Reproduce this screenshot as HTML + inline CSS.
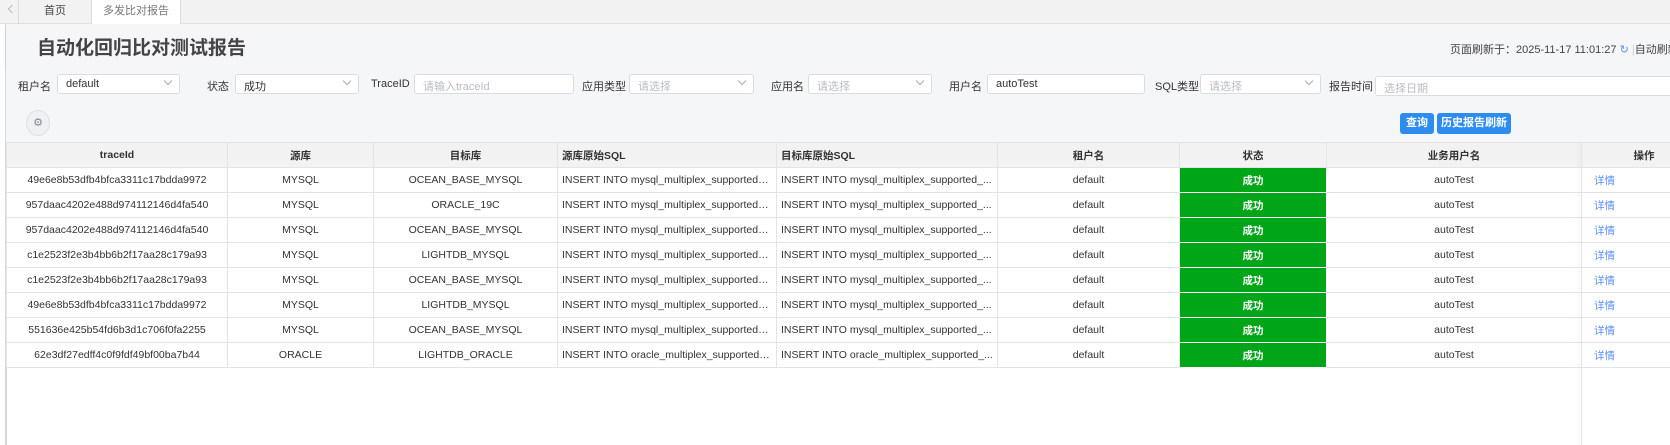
<!DOCTYPE html>
<html><head><meta charset="utf-8"><style>
*{box-sizing:border-box;margin:0;padding:0}
body{width:1670px;height:445px;overflow:hidden;background:#fff;font-family:"Liberation Sans","Noto Sans CJK SC",sans-serif;font-size:11px;color:#333;position:relative}
.a{position:absolute;white-space:nowrap}
.tabs{left:0;top:0;width:1670px;height:24px;background:#f2f2f2;border-bottom:1px solid #e0e0e0}
.hdr{left:6px;top:24px;width:1664px;height:44px;background:#f5f6f8;box-shadow:0 2px 3px rgba(0,0,0,.08)}
.flt{left:6px;top:68px;width:1664px;height:74px;background:#f5f6f8}
.lbl{font-size:11px;color:#333;top:78px}
.inp{top:74px;height:20px;background:#fff;border:1px solid #d8dce5;border-radius:3px;font-size:11px;padding:3px 8px;color:#333}
.ph{color:#b8bcc4}
.arr{position:absolute;right:8px;top:3px;width:6px;height:6px;border-right:1px solid #aaa;border-bottom:1px solid #aaa;transform:rotate(45deg)}
table{position:absolute;left:6px;top:142px;border-collapse:collapse;table-layout:fixed;width:1700px}
td,th{height:25px;border:1px solid #e4e4e4;font-size:10.5px;text-align:center;white-space:nowrap;overflow:hidden;text-overflow:ellipsis;padding:0 4px}
th{background:#f2f2f2;font-weight:bold;color:#333}
td.l,th.l{text-align:left}
td.g{background:#00a518;color:#fff;font-weight:bold;border-color:#fff}
td.lnk{color:#5b8ff9;text-align:left;padding-left:12px}
.btn{top:113px;height:21px;background:#2d8cf0;color:#fff;border-radius:3px;font-size:11px;font-weight:bold;line-height:21px;text-align:center}
</style></head><body>
<div class="a tabs"></div>
<div class="a" style="left:9px;top:6px;width:6px;height:6px;border-left:1px solid #bbb;border-bottom:1px solid #bbb;transform:rotate(45deg)"></div>
<div class="a" style="left:18px;top:0;width:74px;height:24px;border-right:1px solid #ddd;border-left:1px solid #ddd;text-align:center;line-height:23px;font-size:11px;color:#444">首页</div>
<div class="a" style="left:92px;top:0;width:89px;height:25px;background:#fff;border-right:1px solid #ddd;text-align:center;line-height:23px;font-size:11px;color:#777">多发比对报告</div>
<div class="a" style="left:5px;top:24px;width:2px;height:421px;background:#d5d8de"></div>
<div class="a hdr"></div>
<div class="a" style="left:37px;top:33px;font-size:19px;font-weight:bold;color:#444">自动化回归比对测试报告</div>
<div class="a" style="left:1450px;top:41px;font-size:11px;color:#444">页面刷新于：2025-11-17 11:01:27 <span style="color:#5b8ff9">↻</span> <span style="color:#ccc">|</span>自动刷新</div>
<div class="a flt"></div>
<div class="a lbl" style="left:18px">租户名</div>
<div class="a inp" style="left:57px;width:123px">default<i class="arr"></i></div>
<div class="a lbl" style="left:207px">状态</div>
<div class="a inp" style="left:235px;width:124px">成功<i class="arr"></i></div>
<div class="a lbl" style="left:371px">TraceID</div>
<div class="a inp ph" style="left:414px;width:160px">请输入traceId</div>
<div class="a lbl" style="left:582px">应用类型</div>
<div class="a inp ph" style="left:629px;width:125px">请选择<i class="arr"></i></div>
<div class="a lbl" style="left:771px">应用名</div>
<div class="a inp ph" style="left:808px;width:124px">请选择<i class="arr"></i></div>
<div class="a lbl" style="left:949px">用户名</div>
<div class="a inp" style="left:987px;width:158px">autoTest</div>
<div class="a lbl" style="left:1155px">SQL类型</div>
<div class="a inp ph" style="left:1200px;width:121px">请选择<i class="arr"></i></div>
<div class="a lbl" style="left:1329px">报告时间</div>
<div class="a inp ph" style="left:1375px;width:300px;top:76px">选择日期</div>
<div class="a" style="left:26px;top:110px;width:24px;height:26px;border-radius:50%;background:#eef0f3;border:1px solid #dcdfe6;text-align:center;line-height:24px;color:#888;font-size:11px">⚙</div>
<div class="a btn" style="left:1400px;width:34px">查询</div>
<div class="a btn" style="left:1437px;width:74px">历史报告刷新</div>
<table>
<colgroup><col style="width:221px"><col style="width:146px"><col style="width:184px"><col style="width:219px"><col style="width:221px"><col style="width:182px"><col style="width:147px"><col style="width:255px"><col style="width:125px"></colgroup>
<tr><th>traceId</th><th>源库</th><th>目标库</th><th class="l">源库原始SQL</th><th class="l">目标库原始SQL</th><th>租户名</th><th>状态</th><th>业务用户名</th><th>操作</th></tr>
<tr><td>49e6e8b53dfb4bfca3311c17bdda9972</td><td>MYSQL</td><td>OCEAN_BASE_MYSQL</td><td class="l">INSERT INTO mysql_multiplex_supported_...</td><td class="l">INSERT INTO mysql_multiplex_supported_...</td><td>default</td><td class="g">成功</td><td>autoTest</td><td class="lnk">详情</td></tr>
<tr><td>957daac4202e488d974112146d4fa540</td><td>MYSQL</td><td>ORACLE_19C</td><td class="l">INSERT INTO mysql_multiplex_supported_...</td><td class="l">INSERT INTO mysql_multiplex_supported_...</td><td>default</td><td class="g">成功</td><td>autoTest</td><td class="lnk">详情</td></tr>
<tr><td>957daac4202e488d974112146d4fa540</td><td>MYSQL</td><td>OCEAN_BASE_MYSQL</td><td class="l">INSERT INTO mysql_multiplex_supported_...</td><td class="l">INSERT INTO mysql_multiplex_supported_...</td><td>default</td><td class="g">成功</td><td>autoTest</td><td class="lnk">详情</td></tr>
<tr><td>c1e2523f2e3b4bb6b2f17aa28c179a93</td><td>MYSQL</td><td>LIGHTDB_MYSQL</td><td class="l">INSERT INTO mysql_multiplex_supported_...</td><td class="l">INSERT INTO mysql_multiplex_supported_...</td><td>default</td><td class="g">成功</td><td>autoTest</td><td class="lnk">详情</td></tr>
<tr><td>c1e2523f2e3b4bb6b2f17aa28c179a93</td><td>MYSQL</td><td>OCEAN_BASE_MYSQL</td><td class="l">INSERT INTO mysql_multiplex_supported_...</td><td class="l">INSERT INTO mysql_multiplex_supported_...</td><td>default</td><td class="g">成功</td><td>autoTest</td><td class="lnk">详情</td></tr>
<tr><td>49e6e8b53dfb4bfca3311c17bdda9972</td><td>MYSQL</td><td>LIGHTDB_MYSQL</td><td class="l">INSERT INTO mysql_multiplex_supported_...</td><td class="l">INSERT INTO mysql_multiplex_supported_...</td><td>default</td><td class="g">成功</td><td>autoTest</td><td class="lnk">详情</td></tr>
<tr><td>551636e425b54fd6b3d1c706f0fa2255</td><td>MYSQL</td><td>OCEAN_BASE_MYSQL</td><td class="l">INSERT INTO mysql_multiplex_supported_...</td><td class="l">INSERT INTO mysql_multiplex_supported_...</td><td>default</td><td class="g">成功</td><td>autoTest</td><td class="lnk">详情</td></tr>
<tr><td>62e3df27edff4c0f9fdf49bf00ba7b44</td><td>ORACLE</td><td>LIGHTDB_ORACLE</td><td class="l">INSERT INTO oracle_multiplex_supported_...</td><td class="l">INSERT INTO oracle_multiplex_supported_...</td><td>default</td><td class="g">成功</td><td>autoTest</td><td class="lnk">详情</td></tr>
</table>
<div class="a" style="left:1581px;top:142px;width:1px;height:303px;background:#e4e4e4;box-shadow:-2px 0 4px rgba(0,0,0,.1)"></div>
</body></html>
